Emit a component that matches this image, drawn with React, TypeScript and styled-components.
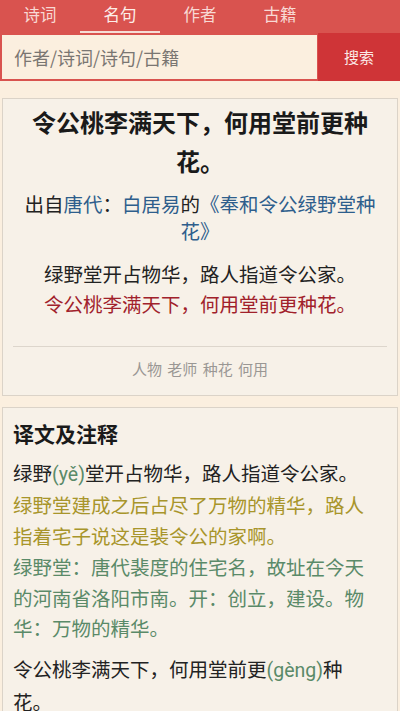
import styled, { createGlobalStyle } from "styled-components";

const GlobalStyle = createGlobalStyle`
  html, body {
    margin: 0;
    padding: 0;
    background: #fbefdf;
  }
  body {
    font-family: "Noto Sans CJK SC", "Noto Sans", Roboto, sans-serif;
    color: #222;
  }
  * { box-sizing: border-box; }
`;

const tabs = ["诗词", "名句", "作者", "古籍"];
const tags = ["人物", "老师", "种花", "何用"];

export default function App() {
  return (
    <>
      <GlobalStyle />
      <Page>
        <TabBar>
          {tabs.map((t, i) => (
            <Tab key={t} active={i === 1}>
              {t}
            </Tab>
          ))}
        </TabBar>
        <SearchRow>
          <SearchInput placeholder="作者/诗词/诗句/古籍" />
          <SearchButton>搜索</SearchButton>
        </SearchRow>

        <Card>
          <MingTitle>令公桃李满天下，何用堂前更种花。</MingTitle>
          <Source>
            出自<Link>唐代</Link>：<Link>白居易</Link>的
            <Link>《奉和令公绿野堂种花》</Link>
          </Source>
          <Poem>
            <div>绿野堂开占物华，路人指道令公家。</div>
            <Highlight>令公桃李满天下，何用堂前更种花。</Highlight>
          </Poem>
          <Divider />
          <Tags>{tags.join(" ")}</Tags>
        </Card>

        <Card wide>
          <SectionTitle>译文及注释</SectionTitle>
          <Para>
            绿野<Pinyin>(yě)</Pinyin>堂开占物华，路人指道令公家。
            <br />
            <Trans>绿野堂建成之后占尽了万物的精华，路人指着宅子说这是裴令公的家啊。</Trans>
            <br />
            <Note>绿野堂：唐代裴度的住宅名，故址在今天的河南省洛阳市南。开：创立，建设。物华：万物的精华。</Note>
          </Para>
          <Para>
            令公桃李满天下，何用堂前更<Pinyin>(gèng)</Pinyin>种花。
          </Para>
        </Card>
      </Page>
    </>
  );
}

const Page = styled.div`
  width: 400px;
  min-height: 711px;
  overflow: hidden;
`;

const TabBar = styled.nav`
  display: flex;
  height: 33px;
  background: #d9534f;
`;

const Tab = styled.div<{ active?: boolean }>`
  width: 80px;
  display: flex;
  align-items: center;
  justify-content: center;
  padding-bottom: 3px;
  font-size: 16.5px;
  color: ${(p) => (p.active ? "#fdeee9" : "#f8d9d4")};
  border-bottom: 2px solid ${(p) => (p.active ? "#f6ddd6" : "transparent")};
`;

const SearchRow = styled.div`
  display: flex;
  height: 48px;
  background: #d9534f;
  padding-left: 2px;
`;

const SearchInput = styled.input`
  flex: 1;
  margin: 2px 1px 2px 0;
  border: none;
  outline: none;
  background: #fbefdf;
  padding: 0 12px;
  font-family: "Noto Sans CJK SC", sans-serif;
  font-size: 18px;
  color: #333;
  &::placeholder {
    color: #7a7672;
  }
`;

const SearchButton = styled.button`
  width: 82px;
  border: none;
  background: #cf3437;
  color: #fbe9e6;
  font-family: "Noto Sans CJK SC", sans-serif;
  font-size: 15px;
  padding: 0 0 2px;
`;

const Card = styled.section<{ wide?: boolean }>`
  margin: 17px 2px 0;
  background: #f7f1e8;
  border: 1px solid #dbd3c8;
  padding: ${(p) => (p.wide ? "10px 16px 12px 10px" : "3px 10px 15px")};
  & + & {
    margin-top: 11px;
  }
`;

const MingTitle = styled.h1`
  margin: 0;
  font-size: 24px;
  line-height: 39px;
  font-weight: 700;
  text-align: center;
  color: #1a1a1a;
`;

const Source = styled.p`
  margin: 10px 0 0;
  font-size: 19.5px;
  line-height: 27px;
  text-align: center;
  color: #222;
`;

const Link = styled.span`
  color: #2e5e8c;
`;

const Poem = styled.div`
  margin-top: 15px;
  font-size: 19.5px;
  line-height: 30px;
  text-align: center;
  color: #222;
`;

const Highlight = styled.div`
  color: #a1212b;
`;

const Divider = styled.hr`
  margin: 27px 0 0;
  border: none;
  border-top: 1px solid #ddd6cc;
`;

const Tags = styled.div`
  margin-top: 11px;
  font-size: 15px;
  line-height: 22px;
  text-align: center;
  color: #9a9794;
  word-spacing: 2px;
`;

const SectionTitle = styled.h2`
  margin: 0;
  font-size: 21px;
  line-height: 30px;
  font-weight: 700;
  color: #1a1a1a;
`;

const Para = styled.p`
  margin: 9.5px 0 0;
  font-size: 19.5px;
  line-height: 30.8px;
  color: #222;
`;

const Pinyin = styled.span`
  font-family: Roboto, "Noto Sans", sans-serif;
  color: #5a8a68;
`;

const Trans = styled.span`
  color: #a8952b;
`;

const Note = styled.span`
  color: #5a8a68;
`;
